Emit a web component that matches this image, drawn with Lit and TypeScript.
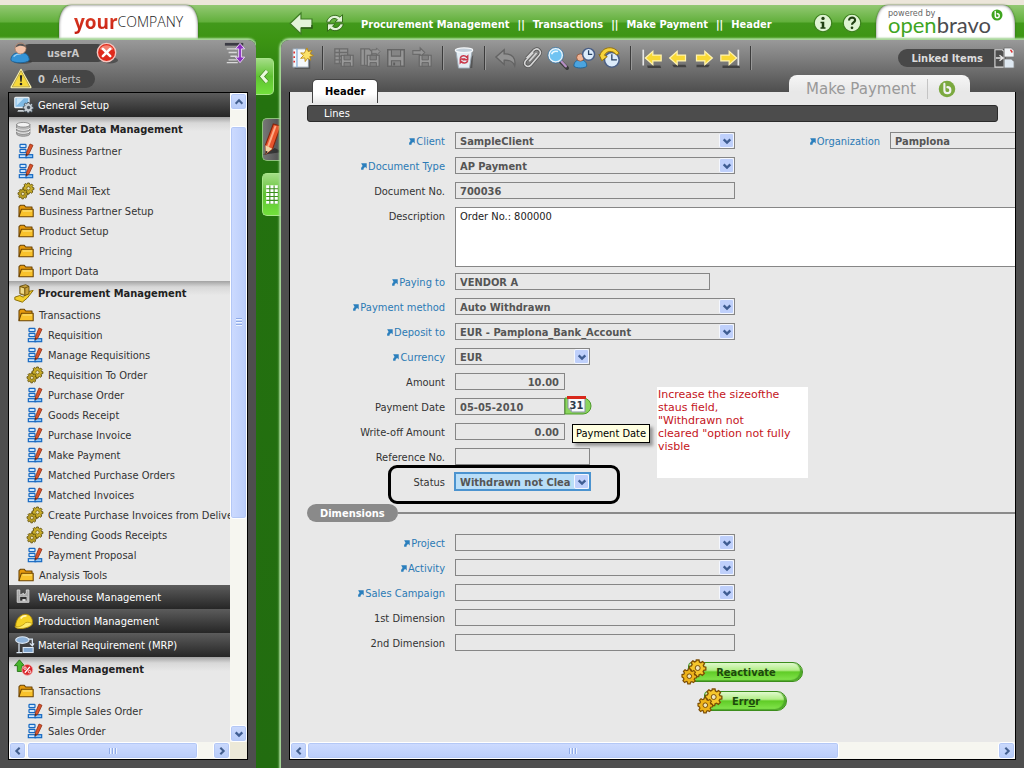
import { LitElement, html, svg, css, nothing, TemplateResult } from "lit";
import { customElement, property } from "lit/decorators.js";
import { classMap } from "lit/directives/class-map.js";

const gearPath =
  "M7 0h3l.5 2.2 1.6.8 2-1.2 2 2.2-1.3 1.9.6 1.6 2.2.5v3l-2.300.5-.7 1.500 1.300 2-2.200 2-1.900-1.200-1.700.7-.5 2h-3l-.5-2.200-1.500-.7-2 1.200-2-2.200 1.200-1.900-.6-1.600L-.6 10V7l2.200-.5.8-1.600L1.200 3l2-2.100 2 1.200 1.400-.6z";

const gears = (a: string, b: string, line: string) => svg`
  <g stroke=${line} stroke-width="1.500">
    <path transform="translate(8 0) scale(.9)" d=${gearPath} fill=${a}/>
    <circle cx="15.700" cy="8" r="2.500" fill="#efe6bd" stroke-width="1"/>
    <path transform="translate(.5 9) scale(.8)" d=${gearPath} fill=${b}/>
    <circle cx="7.300" cy="16.200" r="2.300" fill="#efe6bd" stroke-width="1"/>
  </g>`;

const bravoMark = (ring: string, letter: string) => svg`
  <circle cx="12" cy="12" r="11" fill=${ring}/>
  <path d="M8.500 5v8.500a4 4 0 1 0 4-4" fill="none" stroke=${letter} stroke-width="2.800" stroke-linecap="round"/>`;

const floppy = svg`
  <path d="M9 9h13v12H9z" fill="#999" stroke="#666" stroke-width="1.300"/>
  <path d="M12 9h7v5h-7zM12 17h7v4h-7z" fill="#808080" stroke="#666"/>`;

const clockFace = (cx: number, cy: number, r: number) => svg`
  <circle cx=${cx} cy=${cy} r=${r} fill="#dcebfa" stroke="#4a5f86" stroke-width="1.600"/>
  <path d=${`M${cx} ${cy - r + 2}V${cy}H${cx + r - 2.5}`} fill="none" stroke="#274063" stroke-width="1.400"/>`;

const yellowArrow = "M2 12l9-8v4.500h10v7H11V20z";

const ICONS: Record<string, TemplateResult> = {
  form: svg`
    <g fill="#cfe6fb" stroke="#1769c2" stroke-width="1.800">
      <rect x="3" y="2" width="9" height="5" rx="1"/><rect x="3" y="9.500" width="9" height="5" rx="1"/>
      <rect x="2" y="17.500" width="11" height="4.500"/><rect x="12" y="17.500" width="10" height="4.500" fill="#8fc6f5"/>
    </g>
    <path d="M18 1.500l4.500 2-6.500 13.500-3.700 2.400.2-4.700z" fill="#d9522b" stroke="#8f2f14" stroke-width="1.200"/>
    <path d="M12.300 19.200l.1-3.300 2.400 1.300z" fill="#4a2a18"/>`,
  process: gears("#c9ad28", "#b89d22", "#5f4f0c"),
  action: gears("#f5c62c", "#eeb31a", "#7d4f05"),
  folder: svg`
    <path d="M1.500 20.500V5.500l2-2h6l2 2.500h9.500v3" fill="#e79b0c" stroke="#6b4302" stroke-width="1.600" stroke-linejoin="round"/>
    <path d="M1.500 20.500L5 9.500h17.800v11z" fill="#f9c22b" stroke="#6b4302" stroke-width="1.600" stroke-linejoin="round"/>
    <path d="M7 12h14" stroke="#fff0a0" stroke-width="1.200"/>`,
  setup: svg`
    <rect x="1" y="3" width="17" height="12" rx="1" fill="#7fb9e4" stroke="#e6edf3" stroke-width="1.600"/>
    <path d="M3 13L12 4H3z" fill="#c8e4f7"/><path d="M5 18h8l1 2H4z" fill="#c9d0d6"/>
    <path transform="translate(11.500 9) scale(.68)" d=${gearPath} fill="#c5cdd4" stroke="#3e4a55" stroke-width="1.500"/>
    <circle cx="17.500" cy="15" r="2" fill="#4a5560"/>`,
  database: svg`<g transform="translate(1.500 2.500) scale(.8)">
    <path d="M2 5v14c0 5 20 5 20 0V5z" fill="#b9b9b9" stroke="#6d6d6d"/>
    <ellipse cx="12" cy="5.500" rx="10" ry="3.500" fill="#f2f2f2" stroke="#6d6d6d"/>
    <path d="M2 10.500c0 4.500 20 4.500 20 0M2 15c0 4.500 20 4.500 20 0" fill="none" stroke="#f5f5f5" stroke-width="1.500"/>
    <path d="M2 12c0 4.500 20 4.500 20 0M2 16.500c0 4.500 20 4.500 20 0" fill="none" stroke="#777"/></g>`,
  procurement: svg`
    <path d="M1 17l6-2 4 2 7-7 5-1-7 9-6 5-9-3z" fill="#f3cf2c" stroke="#8c6e06" stroke-width="1.200"/>
    <path d="M7 4l7-2 4 2v9l-5 2-6-2z" fill="#c7a13c" stroke="#5f4708"/><path d="M7 4l6 2 5-2M13 6v9" fill="none" stroke="#5f4708"/>
    <path d="M8 5.500l4 1.200v6.500l-4-1.300z" fill="#ecd98c"/>`,
  warehouse: svg`<g transform="translate(1.500 2) scale(.78)">
    <path d="M3 21V10V2h4v8l6-3v3l4-3V2h4v19z" fill="#a9a9a9" stroke="#d8d8d8" stroke-width="1.400"/>
    <rect x="7" y="12" width="11" height="7" fill="#2f2f2f" stroke="#ddd"/><path d="M11 17.500h5" stroke="#ddd" stroke-width="3"/></g>`,
  helmet: svg`
    <path d="M2 18C2 9 9 3 15 4c6 1 8 7 7 12-3 4-13 6-19 4z" fill="#f5d327" stroke="#a98707"/>
    <path d="M1 18c3 2 8 1 13-4 3-1 6 0 8 1-1 4-13 8-20 5z" fill="#fdeb6c" stroke="#a98707" stroke-width=".8"/>
    <path d="M8 9c2-3 5-3.500 7-3" fill="none" stroke="#fff7b8" stroke-width="2"/>`,
  mrp: svg`
    <ellipse cx="10" cy="6" rx="8" ry="4" fill="#8eb2d8" stroke="#dce8f4" stroke-width="1.300"/>
    <path d="M6 10v11M3 21h7M17 5h5v8M19 10l3 3 2-3" fill="none" stroke="#dce8f4" stroke-width="1.500"/>
    <rect x="11" y="15" width="12" height="6" fill="#7fa5ce" stroke="#dce8f4" stroke-width="1.300"/>`,
  sales: svg`
    <path d="M6.500 1l6 7H9.500v7H4V8H.5z" fill="#46b52b" stroke="#1f6b10"/>
    <circle cx="16" cy="13" r="6.500" fill="#d9272c" stroke="#f2a6a6"/>
    <path d="M19 9.500l-6 7" stroke="#fff" stroke-width="1.500"/><circle cx="13.200" cy="11" r="1.500" fill="none" stroke="#fff"/><circle cx="18.600" cy="15.200" r="1.500" fill="none" stroke="#fff"/>`,
  user: svg`
    <ellipse cx="14" cy="21.500" rx="10" ry="2.500" fill="#333" opacity=".5"/>
    <path d="M1 20c0-6 4-8.500 10-8.500S21 14 21 20c-3 3.500-17 3.500-20 0z" fill="#3593d6" stroke="#1a6299"/>
    <path d="M4 16c2-2.500 5-3 8-3" stroke="#9cd2f5" stroke-width="1.500" fill="none"/>
    <circle cx="11.500" cy="7" r="6" fill="#f1c2a8" stroke="#a6745b" stroke-width=".7"/><path d="M6 6c1-6 10-6 11.500 0-3-2-7-3-11.500 0z" fill="#555"/>`,
  close: svg`
    <ellipse cx="15" cy="20" rx="9" ry="3.500" fill="#333" opacity=".6"/>
    <circle cx="11.500" cy="11.500" r="10" fill="#df2a1c" stroke="#f6c5bf" stroke-width="1.500"/>
    <path d="M4 8c3-6 12-6 15 0-4 2-10 2-15 0z" fill="#f48272"/>
    <path d="M7.500 7.500l8 8m0-8l-8 8" stroke="#fff" stroke-width="2.800" stroke-linecap="round"/>`,
  warning: svg`
    <path d="M12 2L1.500 21h21z" fill="#f7d93a" stroke="#fbf3b0" stroke-width="2" stroke-linejoin="round"/>
    <path d="M12 3L2.500 20.500h19z" fill="none" stroke="#a48a17" stroke-width=".8"/>
    <path d="M10.700 8h2.600l-.6 7h-1.400z" fill="#222"/><circle cx="12" cy="17.500" r="1.400" fill="#222"/>`,
  expand: svg`
    <g stroke="#d8d8d8" stroke-width="1.500"><path d="M3 7.500h11M5 11.500h9M7 15.500h7M5 19.500h9M3 22.500h12"/></g>
    <path d="M1 2.500h20" stroke="#3b3b44" stroke-width="3"/>
    <path d="M17.500 1.500l5 6h-3.500v9h3.500l-5 6-5-6H16v-9h-3.500z" fill="#8a2fc0" stroke="#efdcf8" stroke-width="1"/>`,
  back: svg`<path d="M1 12.500L12 2v6h11v9H12v6z" fill="#e2f3d8" stroke="#3f7d25" stroke-width="1.200"/><path d="M12 17h11v-3" fill="none" stroke="#2a5c14" stroke-width="1.500"/>`,
  refresh: svg`
    <g fill="#e2f3d8" stroke="#2c6413" stroke-width="1.100">
      <path d="M2 11C3 4 12 0 18 5l3-3v9h-9l3-3c-4-3-8-1-9 3z"/><path d="M22 13c-1 7-10 11-16 6l-3 3v-9h9l-3 3c4 3 8 1 9-3z"/>
    </g>`,
  info: svg`<circle cx="12" cy="12" r="10.500" fill="#dff3d3" stroke="#3b7f1d" stroke-width="1.400"/><circle cx="12" cy="6.500" r="2" fill="#1f3f12"/><path d="M9 10.500h4.500V17H15v1.800H9V17h1.500v-4.700H9z" fill="#1f3f12"/>`,
  help: svg`<circle cx="12" cy="12" r="10.500" fill="#dff3d3" stroke="#3b7f1d" stroke-width="1.400"/><path d="M8.500 9c0-4.800 7.500-4.500 7.200-.2-.2 2.500-3.700 2.400-3.700 5.400" fill="none" stroke="#1f3f12" stroke-width="2.600"/><circle cx="12" cy="17.800" r="1.600" fill="#1f3f12"/>`,
  "new": svg`
    <path d="M4 3h14l3 3v18H4z" fill="#333" opacity=".4"/>
    <path d="M2 2h13l4 4v16H2z" fill="#f6f9fc" stroke="#8c98a5"/><path d="M6.500 2v20" stroke="#8db3dc" stroke-width="1.500"/>
    <path d="M3.500 5v2m0 3v2m0 3v2" stroke="#d33" stroke-width="1.800"/>
    <path d="M17.500 1l1.300 4 4-1.300-2 3.700 3.700 2-4 1 1 4-3.500-2-2.500 3.500-.5-4-4.500.5 3-3-3-3 4 .3z" fill="#fbe26a" stroke="#b8860b" stroke-width=".9"/>`,
  saveGrid: svg`<path d="M2 2h14v16H2zM2 6h14M2 10h14M2 14h14M7 2v16" fill="#959595" stroke="#6b6b6b" stroke-width="1.400"/>${floppy}`,
  saveNext: svg`<path d="M2 2h9l3 3v15H2zM6 2v18" fill="#959595" stroke="#6b6b6b" stroke-width="1.400"/><path d="M14 3h5v-2l4 4-4 4V7h-5z" fill="#959595" stroke="#6b6b6b"/>${floppy}`,
  save: svg`<path d="M3 3h18v18H3z" fill="#969696" stroke="#646464" stroke-width="1.600"/><path d="M7 3h10v7H7zM7 15h10v6H7z" fill="#858585" stroke="#646464" stroke-width="1.200"/><path d="M10 17v3" stroke="#5c5c5c" stroke-width="2"/>`,
  saveMove: svg`<path d="M2 4h8V1l5 5-5 5V8H2z" fill="#959595" stroke="#6b6b6b" stroke-width="1.200"/>${floppy}`,
  trash: svg`
    <path d="M6 23h15l1-14z" fill="#333" opacity=".5"/>
    <path d="M3 3h18l-3 20H6z" fill="#e4edf4" stroke="#9aa8b5"/><ellipse cx="12" cy="3.500" rx="9.500" ry="2.500" fill="#c2cfda" stroke="#f5f8fa" stroke-width="1.300"/>
    <path d="M8 12c1-3 5-3 7-1l1-1v4h-4l1.500-1.500M16 15c-1 3-5 3-7 1l-1 1v-4h4l-1.500 1.500" fill="none" stroke="#c93a4c" stroke-width="1.700"/>`,
  undo: svg`<path d="M1 11l9-8v4.500c9-.5 13 5 11.500 13-2-5-5-6.500-11.500-6V19z" fill="#929292" stroke="#636363" stroke-width="1.500"/>`,
  clip: svg`
    <path d="M6 12L14 3.500c4-3.500 9.500 1 6 5.500L11 19.500c-4 4-9 0-6-4.500l8-9" fill="none" stroke="#555" stroke-width="3.400"/>
    <path d="M9 15.500l8-9M6 12L14 3.500c4-3.500 9.500 1 6 5.500L11 19.500c-4 4-9 0-6-4.500l8.500-9" fill="none" stroke="#d5d5d5" stroke-width="1.700"/>`,
  search: svg`
    <path d="M15 16l7 7" stroke="#393939" stroke-width="4" stroke-linecap="round"/><path d="M15 15l5.500 6" stroke="#b58fc2" stroke-width="2.600" stroke-linecap="round"/>
    <circle cx="9.500" cy="9" r="7.500" fill="#6fc3f2" stroke="#e8f3fa" stroke-width="2"/><circle cx="9.500" cy="9" r="8.500" fill="none" stroke="#2c6da0" stroke-width=".8"/>
    <path d="M5 8c1-3 4-4 7-3" stroke="#e6f7ff" stroke-width="1.800" fill="none"/>`,
  audit: svg`
    <path d="M1 21c0-5 3-7 7-7s7 2 7 7c-3 2.500-11 2.500-14 0z" fill="#4ba4df" stroke="#1a6299"/><circle cx="8" cy="11.500" r="4" fill="#f0b494" stroke="#8c4d31" stroke-width=".8"/>
    ${clockFace(17, 8, 6.5)}`,
  history: svg`${clockFace(14, 14, 8)}
    <path d="M1 9c3-10 16-11 21-2l-3 1.500C15 3 8 4 6 9l3 1.500-6 4.500-3-7z" fill="#f6d33c" stroke="#8f6c07" stroke-width="1"/>`,
  first: svg`<path d="M6 21h16l1 3H7z" fill="#222" opacity=".6"/><path d="M1.500 2v19" stroke="#e6e6e6" stroke-width="2"/><path transform="translate(2 0)" d=${yellowArrow} fill="#f8d936" stroke="#fff3b0" stroke-width="1.500"/>`,
  prev: svg`<path d="M5 20h16l1 3H7z" fill="#222" opacity=".6"/><path d=${yellowArrow} fill="#f8d936" stroke="#fff3b0" stroke-width="1.500"/>`,
  next: svg`<path d="M3 20h16l-2 3H3z" fill="#222" opacity=".6"/><path transform="matrix(-1 0 0 1 24 0)" d=${yellowArrow} fill="#f8d936" stroke="#fff3b0" stroke-width="1.500"/>`,
  last: svg`<path d="M3 21h20l1 3H3z" fill="#222" opacity=".6"/><path transform="matrix(-1 0 0 1 22 0)" d=${yellowArrow} fill="#f8d936" stroke="#fff3b0" stroke-width="1.500"/><path d="M22 2v19" stroke="#e6e6e6" stroke-width="2"/>`,
  linked: svg`
    <path d="M1 3h8l2 2v17H1z" fill="#4e4e4e" stroke="#ddd" stroke-width="1.200"/><path d="M2 12h8M6 9l4 3-4 3" fill="none" stroke="#e5e5e5" stroke-width="1.500"/>
    <path d="M11 1h8l3 3v7H11z" fill="#f2f5f8" stroke="#777"/><path d="M11 13h8l3 3v7H11z" fill="#dfe9f2" stroke="#777"/><path d="M18 3l2 3" stroke="#d33" stroke-width="1.500"/>`,
  pencil: svg`
    <path d="M5 23l15-2-6-3z" fill="#222" opacity=".7"/>
    <path d="M13 0l5.500 1.500-6 17-5 4L7 16z" fill="#e8542c" stroke="#84240c" stroke-width=".8"/><path d="M14.700 1.500L9 17" stroke="#ffab85" stroke-width="1.500"/>
    <path d="M7 16l5.300 2.500-5 4z" fill="#f0d6a8"/><path d="M7.200 20l1.600.9-1.600 1.600z" fill="#222"/>`,
  table: svg`<path d="M4 0h16v25H4z" fill="#3a8f1c"/><g fill="#fff"><path d="M3-1h4.500v4H3zM9-1h4.500v4H9zM15-1h4.500v4H15zM3 4.500h4.500v4H3zM9 4.500h4.500v4H9zM15 4.500h4.500v4H15zM3 10h4.500v4H3zM9 10h4.500v4H9zM15 10h4.500v4H15zM3 15.500h4.500v4H3zM9 15.500h4.500v4H9zM15 15.500h4.500v4H15zM3 21h4.500v4H3zM9 21h4.500v4H9zM15 21h4.500v4H15z"/></g>`,
  collapse: svg`<path d="M16 3l-8 9 8 9" fill="none" stroke="#3b7d1c" stroke-width="7"/><path d="M16 3l-8 9 8 9" fill="none" stroke="#e9fbdc" stroke-width="5"/>`,
  jump: svg`<path d="M4 1h19v18l-5-5c-4 2-6 5-6 9H4c-1-6 1-10 5-13z" fill="#2b7fbd"/>`,
  bravo: bravoMark("#3fa51f", "#ffffff"),
  bravoSoft: bravoMark("#7ba93f", "#f2f2f2"),
  up: svg`<path d="M4 16l8-8 8 8" fill="none" stroke="#44608f" stroke-width="5"/>`,
  down: svg`<path d="M4 8l8 8 8-8" fill="none" stroke="#3f5d92" stroke-width="5.500"/>`,
  left: svg`<path d="M16 4l-8 8 8 8" fill="none" stroke="#44608f" stroke-width="5"/>`,
  right: svg`<path d="M8 4l8 8-8 8" fill="none" stroke="#44608f" stroke-width="5"/>`,
};

const icon = (name: string, size: number) =>
  html`<svg class="icon" width=${size} height=${size} viewBox="0 0 24 24" aria-hidden="true">${ICONS[name]}</svg>`;

const shared = css`
  * { box-sizing: border-box; }
  button { border: 0; padding: 0; margin: 0; background: none; font: inherit; color: inherit; cursor: pointer; }
  a { color: inherit; text-decoration: none; }
  .icon { display: block; flex: none; overflow: visible; }
`;

/** Scroll bar with end buttons and a thumb sized in proportion to its track. */
@customElement("ob-scrollbar")
export class ObScrollbar extends LitElement {
  @property({ type: Boolean, reflect: true }) vertical = false;
  @property({ type: Number }) before = 0;
  @property({ type: Number }) thumb = 1;
  @property({ type: Number }) after = 0;

  static styles = [shared, css`
    :host { display: flex; height: 17px; background: #f6f6f0; min-width: 0; min-height: 0; }
    :host([vertical]) { flex-direction: column; height: auto; width: 17px; }
    button, .thumb { display: flex; align-items: center; justify-content: center; border: 1px solid #fff; border-radius: 3px; background: linear-gradient(#cbdafd, #b7cbf8); box-shadow: inset 0 0 0 1px #b4c8f6; }
    button { width: 17px; height: 17px; flex: none; }
    .thumb { background: linear-gradient(#cddbff, #bacdfa); gap: 1px; }
    :host([vertical]) .thumb { flex-direction: column; background: linear-gradient(90deg, #cddbff, #bacdfa); }
    .thumb i { width: 1px; height: 6px; background: #8fabe8; border-right: 1px solid #eef4fe; box-sizing: content-box; }
    :host([vertical]) .thumb i { width: 6px; height: 1px; border-right: 0; border-bottom: 1px solid #eef4fe; }
  `];

  render() {
    const [a, b] = this.vertical ? ["up", "down"] : ["left", "right"];
    return html`
      <button aria-label="Scroll ${a}">${icon(a, 10)}</button>
      <div style="flex:${this.before} 0 0px"></div>
      <div class="thumb" style="flex:${this.thumb} 0 0px"><i></i><i></i><i></i></div>
      <div style="flex:${this.after} 0 0px"></div>
      <button aria-label="Scroll ${b}">${icon(b, 10)}</button>`;
  }
}

type Entry = [kind: string, text: string, icon: string];
const MENU: Entry[] = [
  ["dark", "General Setup", "setup"],
  ["open", "Master Data Management", "database"],
  ["l1", "Business Partner", "form"],
  ["l1", "Product", "form"],
  ["l1", "Send Mail Text", "process"],
  ["l1", "Business Partner Setup", "folder"],
  ["l1", "Product Setup", "folder"],
  ["l1", "Pricing", "folder"],
  ["l1", "Import Data", "folder"],
  ["open", "Procurement Management", "procurement"],
  ["l1", "Transactions", "folder"],
  ["l2", "Requisition", "form"],
  ["l2", "Manage Requisitions", "form"],
  ["l2", "Requisition To Order", "process"],
  ["l2", "Purchase Order", "form"],
  ["l2", "Goods Receipt", "form"],
  ["l2", "Purchase Invoice", "form"],
  ["l2", "Make Payment", "form"],
  ["l2", "Matched Purchase Orders", "form"],
  ["l2", "Matched Invoices", "form"],
  ["l2", "Create Purchase Invoices from Deliveries", "process"],
  ["l2", "Pending Goods Receipts", "process"],
  ["l2", "Payment Proposal", "form"],
  ["l1", "Analysis Tools", "folder"],
  ["dark", "Warehouse Management", "warehouse"],
  ["dark", "Production Management", "helmet"],
  ["dark", "Material Requirement (MRP)", "mrp"],
  ["open", "Sales Management", "sales"],
  ["l1", "Transactions", "folder"],
  ["l2", "Simple Sales Order", "form"],
  ["l2", "Sales Order", "form"],
];

@customElement("ob-menu")
export class ObMenu extends LitElement {
  static styles = [shared, css`
    :host { display: flex; flex-direction: column; min-height: 0; background: linear-gradient(#999 0, #4e4e4e 60px); border-radius: 0 8px 0 0; box-shadow: 0 0 2px 2px #a9d99a; padding: 0 8px 8px; }
    .status { display: flex; justify-content: space-between; align-items: flex-start; height: 52px; padding: 2px 2px 0; }
    .chips { display: flex; flex-direction: column; gap: 4px; align-items: flex-start; }
    .chip { display: flex; align-items: center; height: 22px; color: #c8c8c8; }
    .chip .text { display: flex; align-items: center; justify-content: center; gap: 7px; height: 18px; margin-left: -12px; background: #454545; border-radius: 9px; padding: 0 14px 0 18px; }
    .chip .user { padding: 0 28px 0 27px; margin-right: -11px; font-weight: 700; }
    .chip .icon { position: relative; }
    .frame { flex: 1; min-height: 0; display: grid; grid-template-columns: minmax(0, 1fr) 17px; grid-template-rows: minmax(0, 1fr) 17px; border: 1px solid #000; background: #ece9d8; }
    ul { list-style: none; margin: 0; padding: 0; overflow: hidden; background: #e8e8e8; }
    li a { display: flex; align-items: center; height: 20px; gap: 5px; white-space: nowrap; color: #333; }
    .l1 a { padding-left: 9px; }
    .l2 a { padding-left: 18px; }
    .dark a, .open a { height: 24px; padding-left: 5px; gap: 4px; }
    .dark a { background: linear-gradient(#5c5c5c, #262626); color: #fff; }
    .open a { background: linear-gradient(#a2a2a2, #d8d8d8 25%, #e8e8e8 60%); font-weight: 700; color: #222; }
  `];

  render() {
    return html`
      <div class="status">
        <div class="chips">
          <div class="chip">${icon("user", 22)}<span class="text user">userA</span><button aria-label="Log out">${icon("close", 22)}</button></div>
          <div class="chip">${icon("warning", 22)}<span class="text"><b>0</b> Alerts</span></div>
        </div>
        <button aria-label="Expand menu">${icon("expand", 22)}</button>
      </div>
      <nav class="frame">
        <ul>${MENU.map(([kind, text, name]) => html`<li class=${kind}><a href="#">${icon(name, kind[0] === "l" ? 16 : 20)}${text}</a></li>`)}</ul>
        <ob-scrollbar vertical .before=${16} .thumb=${392} .after=${207}></ob-scrollbar>
        <ob-scrollbar .before=${1} .thumb=${171} .after=${15}></ob-scrollbar>
      </nav>`;
  }
}

interface Field {
  id: string;
  label: string;
  link?: boolean;
  value?: string;
  kind?: "text" | "select" | "area" | "date";
  size?: "amount" | "short" | "medium" | "full";
  focused?: boolean;
  beside?: Field;
}

const MAIN: Field[] = [
  { id: "client", label: "Client", link: true, kind: "select", value: "SampleClient", beside: { id: "org", label: "Organization", link: true, value: "Pamplona" } },
  { id: "doctype", label: "Document Type", link: true, kind: "select", value: "AP Payment" },
  { id: "docno", label: "Document No.", value: "700036" },
  { id: "description", label: "Description", kind: "area", value: "Order No.: 800000" },
  { id: "payee", label: "Paying to", link: true, value: "VENDOR A", size: "medium" },
  { id: "method", label: "Payment method", link: true, kind: "select", value: "Auto Withdrawn" },
  { id: "deposit", label: "Deposit to", link: true, kind: "select", value: "EUR - Pamplona_Bank_Account" },
  { id: "currency", label: "Currency", link: true, kind: "select", value: "EUR", size: "short" },
  { id: "amount", label: "Amount", value: "10.00", size: "amount" },
  { id: "date", label: "Payment Date", kind: "date", value: "05-05-2010" },
  { id: "writeoff", label: "Write-off Amount", value: "0.00", size: "amount" },
  { id: "reference", label: "Reference No.", size: "short" },
  { id: "status", label: "Status", kind: "select", value: "Withdrawn not Cleared", size: "short", focused: true },
];

const DIMENSIONS: Field[] = [
  { id: "project", label: "Project", link: true, kind: "select" },
  { id: "activity", label: "Activity", link: true, kind: "select" },
  { id: "campaign", label: "Sales Campaign", link: true, kind: "select" },
  { id: "dim1", label: "1st Dimension" },
  { id: "dim2", label: "2nd Dimension" },
];

@customElement("ob-payment-form")
export class ObPaymentForm extends LitElement {
  static styles = [shared, css`
    :host { display: flex; flex-direction: column; min-height: 0; background: #e8e8e8; border: solid #000; border-width: 0 1px 1px; }
    .lines { display: flex; align-items: center; height: 17px; flex: none; margin: 13px 17px 10px; padding: 0 16px; background: #4c4c4c; border: 1px solid #2b2b2b; border-radius: 3px; color: #fff; }
    .view { flex: 1; min-height: 0; overflow: hidden; position: relative; }
    form { width: 905px; }
    .row { display: grid; grid-template-columns: 155px 280px 135px 305px; column-gap: 10px; min-height: 25px; align-items: start; }
    .row.tall { min-height: 66px; }
    label { height: 19px; line-height: 19px; text-align: right; white-space: nowrap; color: #333; }
    label a { display: inline-flex; align-items: center; gap: 1px; color: #2b7ab5; }
    input, select, textarea { display: block; width: 100%; height: 17px; margin: 0; padding: 1px 4px 0; border: 1px solid #868686; border-radius: 0; background: #e8e8e8; font: inherit; font-weight: 700; color: #555; outline: 0; appearance: none; }
    textarea { height: 60px; grid-column: 2 / -1; line-height: 15px; background: #fff; font-weight: 400; color: #222; resize: none; overflow: hidden; }
    .control { display: flex; }
    .amount input { width: 110px; text-align: right; padding-right: 5px; }
    .date input { width: 110px; }
    .short > * { width: 135px; }
    .medium > * { width: 255px; }
    .pick { display: grid; width: 280px; }
    .pick > * { grid-area: 1 / 1; }
    .short .pick { width: 135px; }
    .pick select { padding-right: 18px; line-height: 15px; }
    .pick .drop { justify-self: end; align-self: center; display: flex; align-items: center; justify-content: center; width: 15px; height: 15px; margin-right: 1px; border-radius: 2px; border: 1px solid #f4f7ff; background: #bfd0fb; pointer-events: none; }
    .focused select { background: #b9def8; border-color: #4b93cf; box-shadow: 0 0 0 1px #4b93cf; }
    .calendar { display: flex; align-items: flex-end; width: 27px; height: 17px; }
    .section { display: flex; align-items: flex-start; margin: 0; padding: 6px 0 12px 17px; font-size: 11px; }
    .section span { height: 18px; line-height: 19px; padding: 0 13px; border-radius: 9px; background: #8a8a8a; color: #fff; white-space: nowrap; }
    .section::after { content: ""; flex: 1; height: 2px; margin-top: 8px; background: #8a8a8a; }
    .actions { display: flex; flex-direction: column; align-items: center; gap: 4px; }
    .actions button { display: flex; align-items: center; height: 25px; font-weight: 700; color: #1d4a0c; }
    .actions .icon { position: relative; }
    .actions span { height: 20px; line-height: 20px; margin-left: -18px; padding: 0 26px 0 27px; border: 1px solid #3c8d1c; border-radius: 4px 10px 10px 4px; box-shadow: inset -2px -1px 1px #4ea82a; background: linear-gradient(#e0f9cd, #b3ee88 40%, #60cc27 50%, #86e650); }
    .tip { position: absolute; left: 282px; top: 292px; height: 19px; line-height: 18px; padding: 0 3px; border: 1px solid #000; background: #ffffe1; color: #000; white-space: nowrap; box-shadow: 3px 3px 3px #999; }
    .mark { position: absolute; left: 98px; top: 333px; width: 232px; height: 39px; border: 3px solid #000; border-radius: 9px; pointer-events: none; }
    .note { position: absolute; left: 367px; top: 255px; width: 151px; height: 91px; margin: 0; padding: 1px; background: #fff; color: #c4141b; font-family: "DejaVu Sans", sans-serif; font-size: 11px; line-height: 13px; white-space: pre; }
  `];

  private label(f: Field) {
    return html`<label for=${f.id}>${f.link ? html`<a href="#">${icon("jump", 7)}${f.label}</a>` : f.label}</label>`;
  }

  private control(f: Field) {
    if (f.kind === "area") return html`<textarea id=${f.id} .value=${f.value ?? ""}></textarea>`;
    const body = f.kind === "select"
      ? html`<div class="pick"><select id=${f.id}><option>${f.value ?? ""}</option></select><span class="drop">${icon("down", 10)}</span></div>`
      : html`<input id=${f.id} .value=${f.value ?? ""} />`;
    return html`<div class=${classMap({ control: true, [f.size ?? "full"]: true, date: f.kind === "date", focused: !!f.focused })}>
      ${body}
      ${f.kind === "date" ? html`<button type="button" class="calendar" aria-label="Choose date">
        <svg class="icon" width="27" height="20" viewBox="0 0 27 20">
          <path d="M0 3h18a8 8 0 0 1 0 16H0z" fill="#8bd45e" stroke="#4c9a2a"/>
          <path d="M3 2h17v15H7l-4-4z" fill="#f7f9fb" stroke="#8793a0"/><path d="M3 13l4 4v-4z" fill="#aab4be"/>
          <path d="M2 1h19v3H2z" fill="#d8281b"/>
          <text x="11.500" y="14" text-anchor="middle" font-size="11" font-weight="700" fill="#2b3a4c">31</text>
        </svg></button>` : nothing}
    </div>`;
  }

  private row(f: Field) {
    return html`<div class=${classMap({ row: true, tall: f.kind === "area" })}>
      ${this.label(f)}${this.control(f)}${f.beside ? html`${this.label(f.beside)}${this.control(f.beside)}` : nothing}
    </div>`;
  }

  render() {
    return html`
      <a class="lines" href="#">Lines</a>
      <div class="view">
        <form>
          ${MAIN.map((f) => this.row(f))}
          <h2 class="section"><span>Dimensions</span></h2>
          ${DIMENSIONS.map((f) => this.row(f))}
          <div class="actions">
            <button type="button">${icon("action", 24)}<span>R<u>e</u>activate</span></button>
            <button type="button">${icon("action", 24)}<span>Err<u>o</u>r</span></button>
          </div>
        </form>
        <div class="tip" role="tooltip">Payment Date</div>
        <div class="mark"></div>
        <p class="note">Increase the sizeofthe
staus field,
"Withdrawn not
cleared "option not fully
visble</p>
      </div>
      <ob-scrollbar .before=${0} .thumb=${532} .after=${160}></ob-scrollbar>`;
  }
}

const TOOLS: string[][] = [
  ["new"],
  ["saveGrid", "saveNext", "save", "saveMove"],
  ["trash"],
  ["undo", "clip", "search", "audit", "history"],
  ["first", "prev", "next", "last"],
];

@customElement("app-root")
export class AppRoot extends LitElement {
  static styles = [shared, css`
    :host { display: grid; grid-template: 40px minmax(0, 1fr) / 256px 25px minmax(0, 1fr); height: 100vh; overflow: hidden; background: #236f10; font: 11px "DejaVu Sans Condensed", "DejaVu Sans", sans-serif; }
    header { grid-column: 1 / -1; display: grid; grid-template-columns: subgrid; border-top: 5px solid #ece6da; background: linear-gradient(#93c873, #62b03c 48%, #42991b 52%, #3c9413); }
    .company { justify-self: start; display: flex; align-items: center; justify-content: center; width: 139px; margin-left: 59px; padding-bottom: 2px; background: #fff; border-radius: 12px 12px 0 0 / 20px 20px 0 0; box-shadow: inset 0 0 3px #666, 0 0 2px #2b5c18; font: 300 14px "Open Sans", sans-serif; color: #222; }
    .company b { font-size: 19px; font-weight: 700; background: linear-gradient(#e2492f, #c3190d); background-clip: text; -webkit-background-clip: text; color: transparent; }
    .bar { grid-column: 3; display: flex; align-items: center; color: #fff; font-weight: 700; }
    .bar .nav { display: flex; align-items: center; gap: 12px; padding-left: 8px; }
    .crumbs { display: flex; gap: 8px; margin-left: 16px; margin-right: auto; padding-top: 3px; white-space: nowrap; }
    .help { display: flex; gap: 9px; margin-right: 14px; }
    .brand { align-self: stretch; display: grid; grid-template-columns: auto auto; align-content: start; justify-content: center; width: 139px; margin-right: 9px; padding-top: 4px; background: #fff; border-radius: 12px 12px 0 0 / 20px 20px 0 0; box-shadow: inset 0 0 3px #666, 0 0 2px #2b5c18; font-weight: 400; }
    .brand small { grid-column: 1 / -1; font-size: 9px; line-height: 9px; color: #666; }
    .brand strong { font: 400 22px/14px Lato, sans-serif; color: #4b4b4f; }
    .brand em { font-style: normal; color: #3fa51f; }
    .brand .icon { margin-top: -9px; }
    .rail { display: flex; flex-direction: column; padding-top: 18px; background: linear-gradient(#3c9413, #24720f 60px, #226c10); }
    .rail button { display: flex; align-items: center; justify-content: center; width: 19px; height: 43px; margin-bottom: 12px; align-self: flex-end; border: 1px solid #a9e68a; border-right: 0; border-radius: 5px 0 0 5px; background: linear-gradient(#a4dd86, #5fc232 50%, #72e03c); }
    .rail .fold { align-self: flex-start; width: 18px; height: 37px; margin-bottom: 23px; border: 1px solid #a9e68a; border-left: 0; border-radius: 0 5px 5px 0; }
    .rail .edit { border-color: #8fc07c; background: linear-gradient(90deg, #777, #4e4e4e); }
    .main { display: flex; flex-direction: column; min-width: 0; min-height: 0; padding: 0 8px 8px; border-radius: 8px 0 0 0; background: linear-gradient(#999 0, #4e4e4e 52px); box-shadow: 0 0 2px 2px #a9d99a; clip-path: inset(-4px 0 0 -4px); }
    .tools { display: flex; align-items: center; height: 35px; flex: none; }
    .tools button { display: flex; justify-content: center; width: 26px; }
    .sep { width: 2px; height: 24px; margin: 0 7px; background: #3c3c3c; border-right: 1px solid #999; }
    .linked { display: flex; align-items: center; margin-left: auto; color: #dcdcdc; font-weight: 700; }
    .linked span { height: 18px; line-height: 19px; margin-right: -12px; padding: 0 23px 0 13px; background: #484848; border-radius: 9px 0 0 9px; white-space: nowrap; }
    .linked .icon { position: relative; }
    .tabs { position: relative; display: flex; justify-content: space-between; align-items: flex-end; height: 28px; flex: none; margin-bottom: -11px; padding: 0 46px 0 23px; }
    .tab { height: 24px; line-height: 21px; padding: 0 12px; border: 1px solid #444; border-bottom: 0; border-radius: 5px 5px 0 0; background: linear-gradient(#fff, #fff 60%, #e8e8e8); font-weight: 700; color: #000; }
    .title { display: flex; align-items: center; height: 28px; margin: 0; padding: 0 14px 0 17px; border-radius: 8px 8px 0 0; background: linear-gradient(#f6f6f6, #e8e8e8 60%); font: 400 15px "DejaVu Sans", sans-serif; color: #999; white-space: nowrap; }
    .title .icon { margin-left: 10px; }
    .title i { width: 1px; height: 20px; margin-left: 11px; background: #c4c4c4; }
    ob-payment-form { flex: 1; }
  `];

  render() {
    return html`
      <header>
        <div class="company"><b>your</b>COMPANY</div>
        <div class="bar">
          <div class="nav">
            <button aria-label="Back">${icon("back", 24)}</button>
            <button aria-label="Refresh">${icon("refresh", 20)}</button>
          </div>
          <nav class="crumbs">
            <a href="#">Procurement Management</a><span>||</span><a href="#">Transactions</a><span>||</span><a href="#">Make Payment</a><span>||</span><a href="#">Header</a>
          </nav>
          <div class="help">
            <button aria-label="About">${icon("info", 20)}</button>
            <button aria-label="Help">${icon("help", 20)}</button>
          </div>
          <div class="brand"><small>powered by</small><strong><em>open</em>bravo</strong>${icon("bravo", 12)}</div>
        </div>
      </header>
      <ob-menu></ob-menu>
      <div class="rail">
        <button class="fold" aria-label="Hide menu">${icon("collapse", 15)}</button>
        <button class="edit" aria-label="Form view">${icon("pencil", 32)}</button>
        <button aria-label="Grid view">${icon("table", 17)}</button>
      </div>
      <div class="main">
        <div class="tools">
          ${TOOLS.map((group) => html`${group.map((name) => html`<button aria-label=${name}>${icon(name, group.length === 4 && name !== "saveGrid" && !name.startsWith("save") ? 20 : 22)}</button>`)}<span class="sep"></span>`)}
          <a class="linked" href="#"><span>Linked Items</span>${icon("linked", 22)}</a>
        </div>
        <div class="tabs">
          <button class="tab">Header</button>
          <h1 class="title">Make Payment<i></i>${icon("bravoSoft", 18)}</h1>
        </div>
        <ob-payment-form></ob-payment-form>
      </div>`;
  }
}
